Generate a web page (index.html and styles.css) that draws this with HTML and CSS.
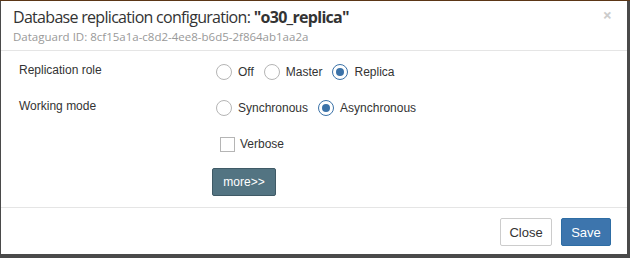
FILE: index.html
```html
<!DOCTYPE html>
<html lang="en">
<head>
  <meta charset="UTF-8">
  <title>Database replication configuration</title>
  <link rel="stylesheet" href="styles.css">
</head>
<body>
  <div class="modal">
    <div class="modal-header">
      <span class="close-x">&times;</span>
      <h4 class="title">Database replication configuration: <b>"o30_replica"</b></h4>
      <div class="subtitle">Dataguard ID: 8cf15a1a-c8d2-4ee8-b6d5-2f864ab1aa2a</div>
    </div>

    <div class="modal-body">
      <div class="row">
        <div class="label">Replication role</div>
        <div class="options">
          <label class="radio"><span class="dot"></span>Off</label>
          <label class="radio"><span class="dot"></span>Master</label>
          <label class="radio"><span class="dot checked"></span>Replica</label>
        </div>
      </div>
      <div class="row">
        <div class="label">Working mode</div>
        <div class="options">
          <label class="radio"><span class="dot"></span>Synchronous</label>
          <label class="radio"><span class="dot checked"></span>Asynchronous</label>
        </div>
      </div>
      <div class="row row-check">
        <div class="label"></div>
        <div class="options">
          <label class="check"><span class="box"></span>Verbose</label>
        </div>
      </div>
      <div class="row">
        <div class="label"></div>
        <div class="options">
          <button class="btn btn-more">more&gt;&gt;</button>
        </div>
      </div>
    </div>

    <div class="modal-footer">
      <button class="btn btn-default">Close</button>
      <button class="btn btn-primary">Save</button>
    </div>
  </div>
</body>
</html>
```

FILE: styles.css
```css
body {
  margin: 0;
  background: #4a4a4a;
  border-top: 1px solid #5b3616;
  font-family: "Liberation Sans", Arial, sans-serif;
  color: #333;
}
.modal {
  margin-left: 1px;
  width: 626px;
  background: #fff;
}
.modal-header {
  position: relative;
  height: 50px;
  box-sizing: border-box;
  padding: 5px 12px 0;
  border-bottom: 1px solid #e5e5e5;
  font-family: "Open Sans", sans-serif;
}
.title {
  margin: 0;
  font-size: 16px;
  font-weight: normal;
  line-height: 22px;
  letter-spacing: -0.7px;
  color: #333;
}
.title b {
  font-weight: bold;
}
.subtitle {
  margin-top: 2px;
  font-size: 11.5px;
  line-height: 14px;
  color: #999;
}
.close-x {
  position: absolute;
  top: 3px;
  right: 15px;
  font-size: 16px;
  font-weight: bold;
  color: #ccc;
}
.modal-body {
  padding: 11px 18px 11px;
  font-size: 12px;
}
.row {
  display: flex;
  margin-bottom: 16px;
}
.row:last-child {
  margin-bottom: 0;
}
.row-check {
  margin-top: 2px;
  margin-bottom: 14px;
}
.row .label {
  width: 197px;
  line-height: 16px;
}
.options {
  display: flex;
  align-items: center;
  gap: 10px;
  line-height: 20px;
}
.radio, .check {
  display: flex;
  align-items: center;
  gap: 6px;
  color: #333;
}
.dot {
  width: 14px;
  height: 14px;
  border: 1px solid #b5b5b5;
  border-radius: 50%;
  position: relative;
}
.dot.checked {
  border-color: #3b72a8;
}
.dot.checked::after {
  content: "";
  position: absolute;
  left: 3px;
  top: 3px;
  width: 8px;
  height: 8px;
  border-radius: 50%;
  background: #3b72a8;
}
.check {
  margin-left: 4px;
  gap: 5px;
}
.box {
  width: 13px;
  height: 13px;
  border: 1px solid #b5b5b5;
}
.btn {
  font-family: "Liberation Sans", Arial, sans-serif;
  font-size: 12px;
  height: 28px;
  border-radius: 2px;
  cursor: pointer;
}
.btn-more {
  margin-left: -4px;
  width: 64px;
  background: #537482;
  border: 1px solid #3f5a66;
  color: #fff;
}
.modal-footer {
  border-top: 1px solid #e5e5e5;
  display: flex;
  justify-content: flex-end;
  gap: 9px;
  padding: 10px 16px 8px;
}
.btn-default {
  width: 52px;
  background: #fff;
  border: 1px solid #ccc;
  color: #333;
  font-size: 13px;
}
.btn-primary {
  width: 50px;
  background: #3d75ad;
  border: 1px solid #2e6da4;
  color: #fff;
  font-size: 13px;
}
```
